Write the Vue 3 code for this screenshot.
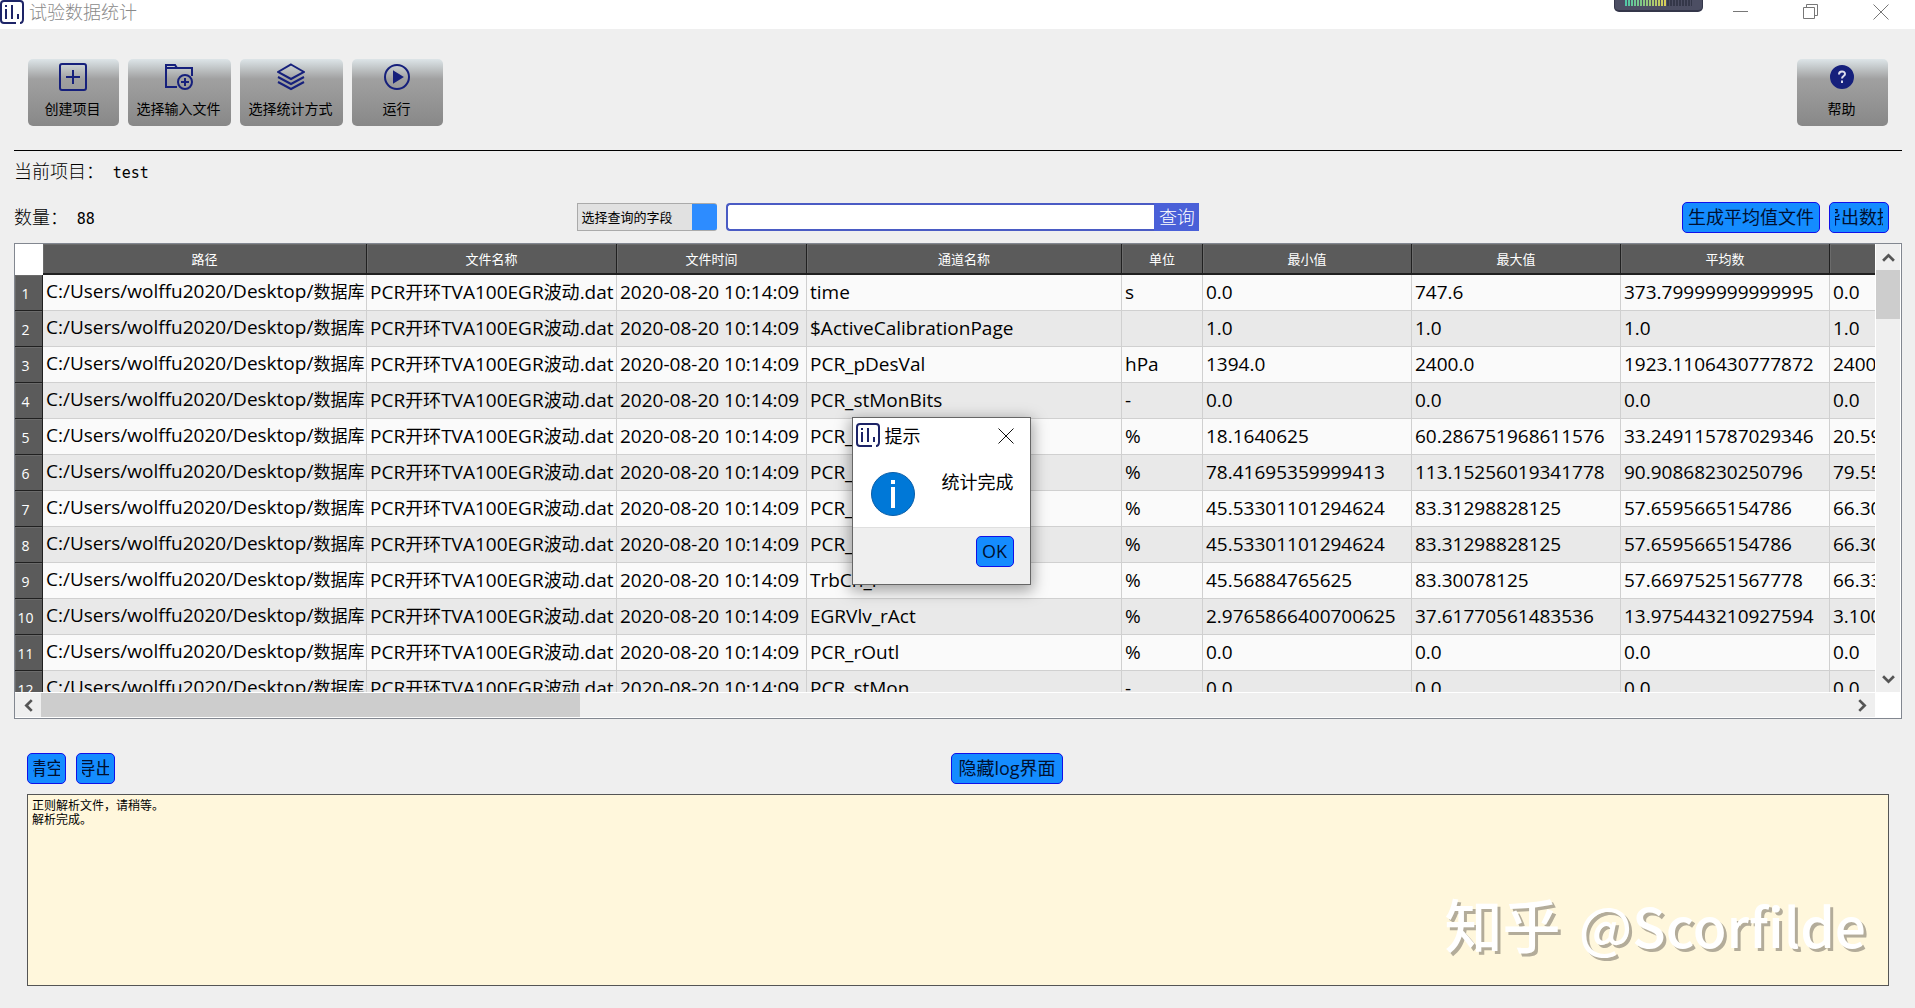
<script setup>
import { ref } from 'vue'

const columns = [
  { title: '', width: 28 },
  { title: '路径', width: 324 },
  { title: '文件名称', width: 250 },
  { title: '文件时间', width: 190 },
  { title: '通道名称', width: 315 },
  { title: '单位', width: 81 },
  { title: '最小值', width: 209 },
  { title: '最大值', width: 209 },
  { title: '平均数', width: 209 },
  { title: '', width: 209 },
]

const rows = [
  ['time', 's', '0.0', '747.6', '373.79999999999995', '0.0'],
  ['$ActiveCalibrationPage', '', '1.0', '1.0', '1.0', '1.0'],
  ['PCR_pDesVal', 'hPa', '1394.0', '2400.0', '1923.1106430777872', '2400.0'],
  ['PCR_stMonBits', '-', '0.0', '0.0', '0.0', '0.0'],
  ['PCR_', '%', '18.1640625', '60.286751968611576', '33.249115787029346', '20.59'],
  ['PCR_', '%', '78.41695359999413', '113.15256019341778', '90.90868230250796', '79.55'],
  ['PCR_', '%', '45.53301101294624', '83.31298828125', '57.6595665154786', '66.30'],
  ['PCR_', '%', '45.53301101294624', '83.31298828125', '57.6595665154786', '66.30'],
  ['TrbCh_r', '%', '45.56884765625', '83.30078125', '57.66975251567778', '66.33'],
  ['EGRVlv_rAct', '%', '2.9765866400700625', '37.61770561483536', '13.975443210927594', '3.100'],
  ['PCR_rOutl', '%', '0.0', '0.0', '0.0', '0.0'],
  ['PCR_stMon', '-', '0.0', '0.0', '0.0', '0.0'],
]

const log = ref('正则解析文件，请稍等。\n解析完成。')
const query = ref('')
</script>

<template>
  <div class="window">
    <header class="titlebar">
      <svg class="logo" viewBox="0 0 24 24" fill="none" stroke="#1d2467" stroke-width="2">
        <path d="M16 23H4a3 3 0 0 1-3-3V4a3 3 0 0 1 3-3h16a3 3 0 0 1 3 3v15q0 4-3 4" />
        <path d="M6 9v10M6 5v2M12 5v14M18 14v5" />
      </svg>
      <h1>试验数据统计</h1>
      <div class="meter"><i class="lit"></i><i class="dim"></i></div>
      <div class="controls">
        <button aria-label="最小化"><svg viewBox="0 0 16 16"><path d="M0 7.500h15" /></svg></button>
        <button aria-label="还原"><svg viewBox="0 0 16 16"><path d="M.5 3.500h11v11H.5zM3.500 3.500v-3h11v11h-3" /></svg></button>
        <button aria-label="关闭"><svg viewBox="0 0 16 16"><path d="M.5.5l15 15M15.500.5l-15 15" /></svg></button>
      </div>
    </header>

    <nav class="toolbar">
      <button class="tool">
        <svg viewBox="0 0 28 28"><rect x="1" y="1" width="26" height="26" rx="2" /><path d="M14 7v14M7 14h14" /></svg>
        创建项目
      </button>
      <button class="tool wide">
        <svg viewBox="0 0 28 28"><path d="M12 24H1V2h9l2 3h15v8M1 5h11" /><circle cx="20" cy="19" r="7" /><path d="M20 15v8M16 19h8" /></svg>
        选择输入文件
      </button>
      <button class="tool wide">
        <svg viewBox="0 0 28 28"><path d="M14 1.500L27 9l-13 7L1 9zM1 14l13 7 13-7M1 19l13 7 13-7" /></svg>
        选择统计方式
      </button>
      <button class="tool">
        <svg viewBox="0 0 28 28"><circle cx="14" cy="14" r="12" /><path class="solid" d="M11 9l8 5-8 5z" /></svg>
        运行
      </button>
      <button class="tool help">
        <svg viewBox="0 0 28 28"><circle class="solid" cx="14" cy="14" r="11" /><path class="mark" d="M11 11.500c0-4 6-4 6-.5 0 2-3 2-3 4.500M14 17.500v2.500" /></svg>
        帮助
      </button>
    </nav>

    <main>
      <p class="info">当前项目： <span class="value">test</span></p>
      <div class="filters">
        <p class="info">数量： <span class="value">88</span></p>
        <form class="search" @submit.prevent>
          <select aria-label="选择查询的字段"><option>选择查询的字段</option></select>
          <input v-model="query" type="text" aria-label="查询内容" />
          <button>查询</button>
        </form>
        <div class="actions">
          <button class="blue average"><span>生成平均值文件</span></button>
          <button class="blue export"><span>导出数据</span></button>
        </div>
      </div>

      <section class="grid">
        <div class="viewport">
          <table>
            <colgroup><col v-for="(c, i) in columns" :key="i" :style="{ width: c.width + 'px' }" /></colgroup>
            <thead>
              <tr><th v-for="(c, i) in columns" :key="i" scope="col">{{ c.title }}</th></tr>
            </thead>
            <tbody>
              <tr v-for="(row, i) in rows" :key="i">
                <th scope="row">{{ i + 1 }}</th>
                <td class="path">C:/Users/wolffu2020/Desktop/<span class="han">数据库</span></td>
                <td>PCR<span class="han">开环</span>TVA100EGR<span class="han">波动</span>.dat</td>
                <td>2020-08-20 10:14:09</td>
                <td v-for="(cell, j) in row" :key="j">{{ cell }}</td>
              </tr>
            </tbody>
          </table>
        </div>
        <div class="scroll vertical">
          <button aria-label="向上"><svg viewBox="0 0 12 12"><path d="M1 9l5-5 5 5" /></svg></button>
          <i></i>
          <button aria-label="向下"><svg viewBox="0 0 12 12"><path d="M1 3l5 5 5-5" /></svg></button>
        </div>
        <div class="scroll horizontal">
          <button aria-label="向左"><svg viewBox="0 0 12 12"><path d="M9 1L4 6l5 5" /></svg></button>
          <i></i>
          <button aria-label="向右"><svg viewBox="0 0 12 12"><path d="M3 1l5 5-5 5" /></svg></button>
        </div>
      </section>

      <section class="logpane">
        <div class="logbar">
          <button class="blue"><span>清空</span></button>
          <button class="blue"><span>导出</span></button>
          <button class="blue toggle"><span>隐藏log界面</span></button>
        </div>
        <textarea v-model="log" aria-label="日志" spellcheck="false"></textarea>
      </section>
    </main>

    <div class="dialog" role="dialog" aria-labelledby="dialog-title">
      <div class="dialog-title">
        <svg class="logo" viewBox="0 0 24 24" fill="none" stroke="#1d2467" stroke-width="2">
          <path d="M16 23H4a3 3 0 0 1-3-3V4a3 3 0 0 1 3-3h16a3 3 0 0 1 3 3v15q0 4-3 4" />
          <path d="M6 9v10M6 5v2M12 5v14M18 14v5" />
        </svg>
        <h2 id="dialog-title">提示</h2>
        <button aria-label="关闭"><svg viewBox="0 0 16 16"><path d="M.5.5l15 15M15.500.5l-15 15" /></svg></button>
      </div>
      <div class="dialog-body">
        <svg viewBox="0 0 44 44"><circle cx="22" cy="22" r="21.500" fill="#0078d7" stroke="#0a5ea8" /><path d="M22 8v4M22 15v21" stroke="#fff" stroke-width="4" /></svg>
        <p>统计完成</p>
      </div>
      <div class="dialog-foot"><button class="blue ok"><span>OK</span></button></div>
    </div>

    <div class="watermark"><span>知乎</span> @Scorfilde</div>
  </div>
</template>

<style>
body {
  margin: 0;
}
</style>

<style scoped>
* {
  box-sizing: border-box;
}
.window {
  position: relative;
  display: flex;
  flex-direction: column;
  height: 100vh;
  min-height: 700px;
  overflow: hidden;
  background: #efefef;
  color: #000;
  font-family: "Open Sans", "Noto Sans CJK SC", sans-serif;
  font-size: 18px;
}
button,
input,
select,
textarea {
  margin: 0;
  padding: 0;
  border: 0;
  border-radius: 0;
  font-family: inherit;
  color: inherit;
}
h1,
h2,
p {
  margin: 0;
  font-size: 18px;
  font-weight: 300;
}
.titlebar {
  display: flex;
  align-items: center;
  flex: none;
  height: 29px;
  padding-right: 26px;
  background: #fff;
}
.logo {
  width: 24px;
  height: 24px;
  margin-bottom: 5px;
}
.titlebar h1 {
  flex: 1;
  margin: 0 0 6px 5px;
  line-height: 24px;
  color: #8a8a8a;
}
.meter {
  display: flex;
  align-self: flex-start;
  height: 12px;
  width: 89px;
  padding: 0 10px 4px;
  margin-right: 30px;
  border: solid #34364a;
  border-width: 0 1px 2px;
  border-radius: 0 0 5px 5px;
  background: #4c4e63;
}
.meter i {
  height: 6px;
}
.lit {
  width: 42px;
  background: repeating-linear-gradient(90deg, transparent 0 2px, #4c4e63 2px 3px), linear-gradient(90deg, #4fc7a8, #8fc77c 50%, #e0cf55);
}
.dim {
  flex: 1;
  background: repeating-linear-gradient(90deg, #343749 0 2px, #4c4e63 2px 3px);
}
.controls {
  display: flex;
  gap: 54px;
  margin-bottom: 6px;
}
.controls button,
.dialog-title button {
  display: flex;
  width: 16px;
  height: 16px;
  background: none;
}
.controls svg,
.dialog-title button svg {
  width: 16px;
  height: 16px;
  fill: none;
  stroke: #777;
}
.toolbar {
  display: flex;
  flex: none;
  gap: 9px;
  height: 122px;
  margin: 0 13px 0 14px;
  padding: 30px 14px 24px;
  border-bottom: 1px solid #000;
}
.tool {
  display: flex;
  flex-direction: column;
  align-items: center;
  width: 91px;
  padding: 4px 2px 0 0;
  border-radius: 5px;
  background: linear-gradient(#dde5e8, #a0a0a0 30%, #888);
  font-size: 14px;
  line-height: 20px;
}
.tool.wide {
  width: 103px;
}
.tool.help {
  margin-left: auto;
}
.tool svg {
  width: 28px;
  height: 28px;
  margin-bottom: 8px;
  fill: none;
  stroke: #16207c;
  stroke-width: 2;
}
.tool .solid {
  fill: #16207c;
}
.tool .mark {
  stroke: #dde;
}
main {
  display: flex;
  flex: 1;
  flex-direction: column;
  min-height: 0;
  padding: 0 13px 22px 14px;
}
.info {
  flex: none;
  line-height: 40px;
  white-space: pre;
}
.value {
  margin-left: 4px;
  font: 15px "DejaVu Sans Mono", monospace;
}
.filters {
  display: flex;
  flex: none;
  align-items: center;
  justify-content: space-between;
  height: 52px;
  padding-right: 13px;
}
.search {
  display: flex;
  height: 28px;
}
.search select {
  appearance: none;
  width: 140px;
  margin-right: 9px;
  padding-left: 3px;
  border: 1px solid #aaa;
  border-right: 0;
  border-radius: 0 3px 3px 0;
  background: linear-gradient(#2d8cff, #2d8cff) right / 25px 100% no-repeat #e1e1e1;
  font-size: 13px;
}
.search input {
  width: 428px;
  padding: 0 4px;
  border: 2px solid #4a5bc4;
  border-right: 0;
  border-radius: 4px 0 0 4px;
  background: #fff;
  font-size: 18px;
}
.search button {
  width: 45px;
  background: #4a60d8;
  color: #fff;
  font-size: 18px;
  font-weight: 300;
  line-height: 26px;
}
.actions {
  display: flex;
  gap: 9px;
}
.blue {
  display: flex;
  width: 39px;
  height: 31px;
  padding: 0 5px;
  border: 1px solid #1010e8;
  border-radius: 5px;
  background: #148cff;
  color: #001030;
  font-size: 18px;
  line-height: 29px;
}
.blue span {
  display: flex;
  flex: 1;
  justify-content: center;
  min-width: 0;
  overflow: hidden;
  white-space: nowrap;
}
.average {
  width: 138px;
}
.export {
  width: 60px;
}
.grid {
  display: grid;
  flex: 1;
  grid-template: minmax(0, 1fr) 26px / minmax(0, 1fr) 26px;
  min-height: 0;
  border: 1px solid #828790;
  background: #fff;
}
.viewport {
  overflow: hidden;
}
table {
  width: 2024px;
  table-layout: fixed;
  border-collapse: separate;
  border-spacing: 0;
}
tr {
  height: 36px;
}
thead tr {
  height: 31px;
}
th {
  padding: 0;
  border: solid #202020;
  border-width: 0 1px 1px 0;
  background: #5b5b5b;
  box-shadow: inset 1px 1px #6b6b6b;
  color: #fff;
  font-size: 13px;
  font-weight: 400;
  line-height: 20px;
}
tbody th {
  padding: 2px 6px 0 0;
  font-size: 14px;
}
thead th {
  border-bottom-width: 2px;
}
thead th:first-child {
  border: 0;
  background: #fff;
  box-shadow: none;
}
td {
  padding: 0 0 2px 3px;
  border: solid #d0d0d0;
  border-width: 0 1px 1px 0;
  background: #fafafa;
  font-size: 19px;
  line-height: 26px;
  white-space: nowrap;
}
tbody tr:nth-child(even) td {
  background: #e9e9e9;
}
.han {
  font-size: 18px;
}
.path .han {
  font-size: 17px;
}
.scroll {
  display: flex;
  background: #efefef;
}
.scroll button {
  display: flex;
  flex: none;
  align-items: center;
  justify-content: center;
  width: 24px;
  height: 24px;
  background: none;
}
.scroll svg {
  width: 13px;
  height: 13px;
  fill: none;
  stroke: #555;
  stroke-width: 2.5;
}
.scroll i {
  background: #cdcdcd;
}
.scroll button:last-child {
  margin-left: auto;
}
.vertical {
  flex-direction: column;
  border: solid #fff;
  border-width: 0 1px;
}
.vertical button {
  height: 26px;
}
.vertical i {
  height: 49px;
}
.vertical button:last-child {
  margin-top: auto;
}
.horizontal {
  border: solid #fff;
  border-width: 1px 0;
}
.horizontal button {
  width: 26px;
}
.horizontal i {
  width: 29%;
}
.logpane {
  display: flex;
  flex: none;
  flex-direction: column;
  padding: 34px 13px 0;
}
.logbar {
  display: flex;
  gap: 10px;
  margin-bottom: 10px;
}
.toggle {
  width: 112px;
  margin: 0 auto;
}
textarea {
  height: 192px;
  padding: 4px;
  border: 1px solid #555;
  outline: 0;
  resize: none;
  background: #fff7dc;
  font-size: 12px;
  line-height: 14px;
}
.dialog {
  position: absolute;
  top: 417px;
  left: calc(50% - 106px);
  width: 179px;
  border: 1px solid #666;
  background: #fff;
  box-shadow: 0 4px 14px 2px rgba(0, 0, 0, 0.35);
}
.dialog-title {
  display: flex;
  align-items: center;
  height: 36px;
  padding: 0 16px 0 3px;
}
.dialog-title .logo {
  margin-bottom: 2px;
}
.dialog-title h2 {
  flex: 1;
  padding: 0 0 2px 5px;
  font-weight: 400;
}
.dialog-title button svg {
  stroke: #111;
}
.dialog-body {
  display: flex;
  justify-content: space-between;
  height: 73px;
  padding: 18px 16px 0 18px;
}
.dialog-body svg {
  width: 44px;
  height: 44px;
}
.dialog-body p {
  font-weight: 400;
  line-height: 20px;
}
.dialog-foot {
  display: flex;
  justify-content: flex-end;
  height: 57px;
  padding: 8px 16px;
  border-top: 1px solid #dfdfdf;
  background: #efefef;
}
.blue.ok {
  width: 38px;
}
.watermark {
  position: absolute;
  right: 49px;
  bottom: 48px;
  color: #fff;
  font: 500 55px/72px "Noto Sans CJK SC", sans-serif;
  text-shadow: 3px 3px #b3ac9a;
  white-space: pre;
  pointer-events: none;
}
.watermark span {
  margin-right: 6px;
  font-size: 58px;
}
</style>
